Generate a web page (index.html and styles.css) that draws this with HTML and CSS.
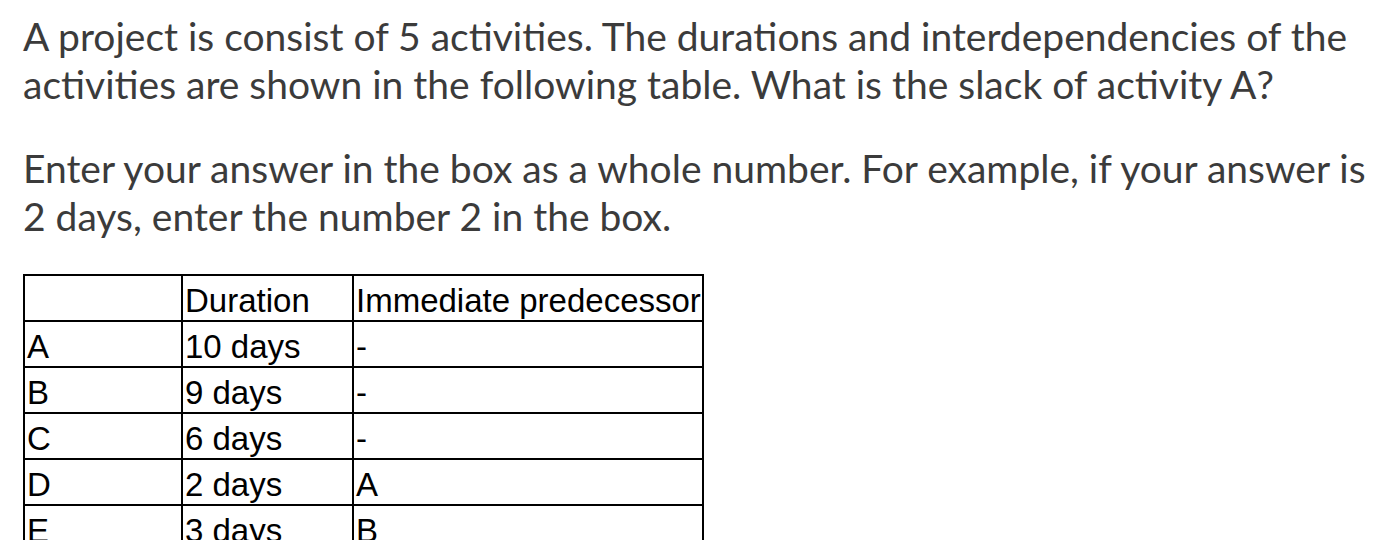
FILE: index.html
```html
<!DOCTYPE html>
<html>
<head>
<meta charset="utf-8">
<link rel="stylesheet" href="styles.css">
</head>
<body>
<div class="question">
  <p class="para">A project is consist of 5 activities. The durations and interdependencies of the activities are shown in the following table. What is the slack of activity A?</p>
  <p class="para">Enter your answer in the box as a whole number. For example, if your answer is 2 days, enter the number 2 in the box.</p>
  <table class="grid">
    <tr><td class="c1"></td><td class="c2">Duration</td><td class="c3">Immediate predecessor</td></tr>
    <tr><td>A</td><td>10 days</td><td>-</td></tr>
    <tr><td>B</td><td>9 days</td><td>-</td></tr>
    <tr><td>C</td><td>6 days</td><td>-</td></tr>
    <tr><td>D</td><td>2 days</td><td>A</td></tr>
    <tr><td>E</td><td>3 days</td><td>B</td></tr>
  </table>
</div>
</body>
</html>
```
FILE: styles.css
```css
html, body {
  margin: 0;
  padding: 0;
  background: #ffffff;
}
.question {
  padding: 13px 0 0 23px;
  font-family: Lato, "Liberation Sans", sans-serif;
  color: #3b3b3b;
}
.para {
  margin: 0 0 37px 0;
  font-size: 39px;
  line-height: 47.5px;
  width: 1352px;
}
.para + .para {
  margin-bottom: 34px;
}
.grid {
  border-collapse: collapse;
  font-family: "Liberation Sans", Arial, sans-serif;
  font-size: 33px;
  color: #000;
}
.grid td {
  border: 2px solid #000;
  height: 43px;
  padding: 0 0 1px 2px;
  vertical-align: bottom;
  line-height: 37px;
}
.grid .c1 { width: 154px; }
.grid .c2 { width: 167px; }
.grid .c3 { width: 346px; }
```
